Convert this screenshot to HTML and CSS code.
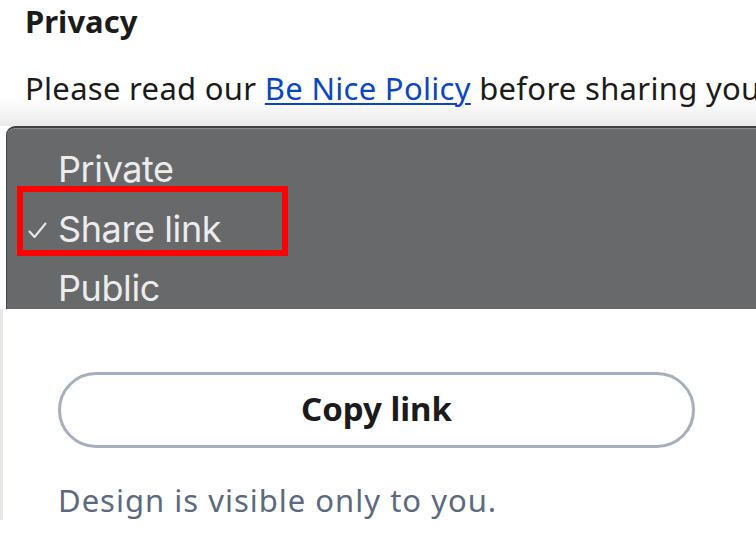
FILE: index.html
```html
<!DOCTYPE html>
<html lang="en">
<head>
<meta charset="utf-8">
<title>Privacy</title>
<link rel="stylesheet" href="styles.css">
</head>
<body>
<div class="page">
  <section class="intro">
    <h2 class="title">Privacy</h2>
    <p class="lead">Please read our <a href="#" class="link">Be Nice Policy</a> before sharing your design.</p>
  </section>
  <div class="menu" role="listbox">
    <div class="item"><span class="check"></span><span class="label">Private</span></div>
    <div class="item selected"><span class="check"><svg width="19" height="17" viewBox="0 0 19 17"><path d="M1.5 9.5 L6.5 15 L17.5 1.5" fill="none" stroke="#e6e6e6" stroke-width="2.1" stroke-linecap="round" stroke-linejoin="round"/></svg></span><span class="label">Share link</span><span class="highlight"></span></div>
    <div class="item"><span class="check"></span><span class="label">Public</span></div>
  </div>
  <section class="sheet">
    <button class="copy">Copy link</button>
    <p class="note">Design is visible only to you.</p>
  </section>
</div>
</body>
</html>
```

FILE: styles.css
```css
html, body {
  margin: 0;
  padding: 0;
  background: #ffffff;
  width: 756px;
  height: 534px;
  overflow: hidden;
}

.page {
  display: flex;
  flex-direction: column;
  font-family: "Noto Sans", "Open Sans", sans-serif;
}

.intro {
  padding: 0 0 0 25px;
  height: 126px;
  background: linear-gradient(to bottom, #ffffff 0, #ffffff 98px, #eaeaea 126px);
  display: flex;
  flex-direction: column;
}

.title {
  margin: 0;
  font-size: 31px;
  font-weight: 700;
  line-height: 42px;
  color: #1b1b1b;
}

.lead {
  margin: 26px 0 0 0;
  font-size: 31px;
  letter-spacing: 0.3px;
  line-height: 40px;
  color: #1b1b1b;
  white-space: nowrap;
}

.link {
  color: #0a46c4;
  text-decoration: underline;
  text-underline-offset: 3px;
  text-decoration-thickness: 2px;
}

.menu {
  margin-left: 6px;
  height: 183px;
  background: #68696b;
  border-top: 2px solid #3e3f41;
  border-left: 1px solid #46474a;
  border-top-left-radius: 9px;
  box-shadow: inset 0 1px 0 #8a8b8d;
  display: flex;
  flex-direction: column;
  gap: 17.5px;
  padding-top: 20px;
  box-sizing: border-box;
}

.item {
  position: relative;
  display: flex;
  align-items: center;
  flex: 0 0 42px;
  height: 42px;
  line-height: 42px;
  font-family: Inter, Roboto, sans-serif;
  font-size: 36px;
  color: #ececec;
  letter-spacing: -0.4px;
}

.check {
  width: 30px;
  padding-left: 21px;
  display: flex;
  align-items: center;
}

.check svg {
  display: block;
  margin-top: 3px;
}

.highlight {
  position: absolute;
  left: 10px;
  top: -21.5px;
  width: 271px;
  height: 70px;
  border: 6px solid #ff0000;
  box-sizing: border-box;
}

.sheet {
  flex: 1;
  border-left: 3px solid #e6e7eb;
  padding: 63px 0 0 55px;
  height: 224px;
  box-sizing: border-box;
}

.copy {
  display: block;
  width: 637px;
  height: 76px;
  border: 3px solid #a6afbb;
  border-radius: 38px;
  background: #ffffff;
  font-family: "Noto Sans", "Open Sans", sans-serif;
  font-size: 33px;
  font-weight: 700;
  line-height: 68px;
  color: #1b1b1b;
  padding: 0 0 2px 0;
}

.note {
  margin: 32px 0 0 0;
  font-size: 31px;
  letter-spacing: 1px;
  line-height: 40px;
  color: #5b6a80;
}
```
